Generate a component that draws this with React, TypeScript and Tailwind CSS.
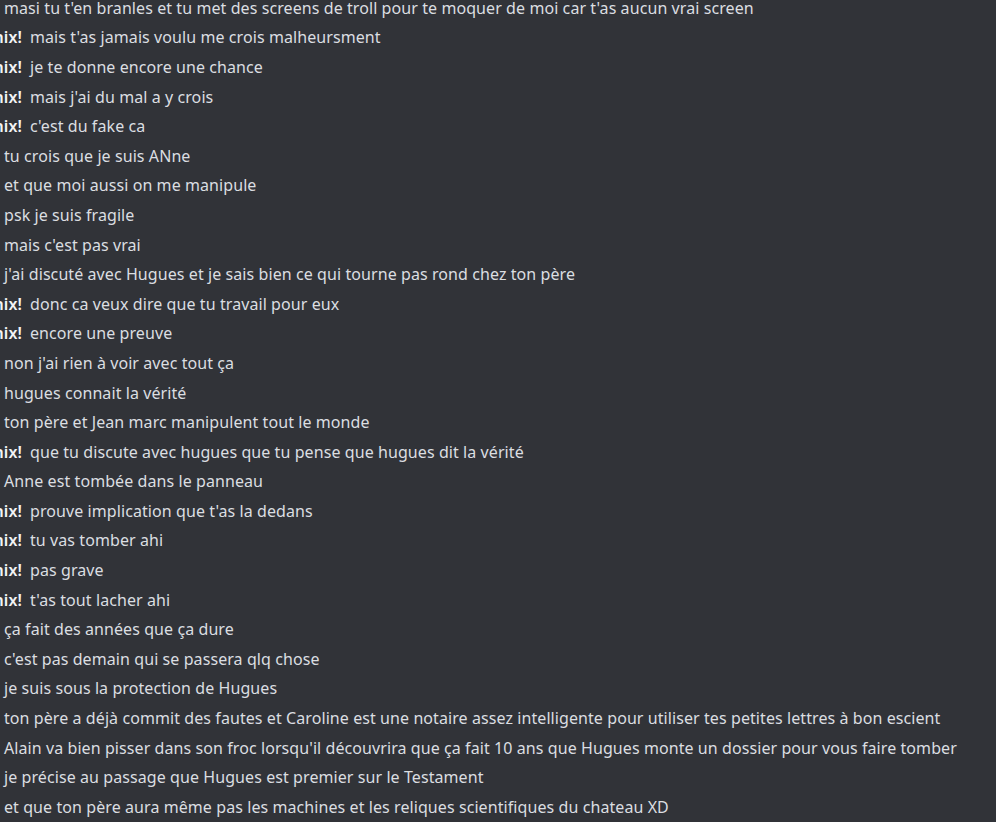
const NAME = 'Phénix!';

const messages: { nix?: boolean; text: string }[] = [
  { text: "masi tu t'en branles et tu met des screens de troll pour te moquer de moi car t'as aucun vrai screen" },
  { nix: true, text: "mais t'as jamais voulu me crois malheursment" },
  { nix: true, text: 'je te donne encore une chance' },
  { nix: true, text: "mais j'ai du mal a y crois" },
  { nix: true, text: "c'est du fake ca" },
  { text: 'tu crois que je suis ANne' },
  { text: 'et que moi aussi on me manipule' },
  { text: 'psk je suis fragile' },
  { text: "mais c'est pas vrai" },
  { text: "j'ai discuté avec Hugues et je sais bien ce qui tourne pas rond chez ton père" },
  { nix: true, text: 'donc ca veux dire que tu travail pour eux' },
  { nix: true, text: 'encore une preuve' },
  { text: "non j'ai rien à voir avec tout ça" },
  { text: 'hugues connait la vérité' },
  { text: 'ton père et Jean marc manipulent tout le monde' },
  { nix: true, text: 'que tu discute avec hugues que tu pense que hugues dit la vérité' },
  { text: 'Anne est tombée dans le panneau' },
  { nix: true, text: "prouve implication que t'as la dedans" },
  { nix: true, text: 'tu vas tomber ahi' },
  { nix: true, text: 'pas grave' },
  { nix: true, text: "t'as tout lacher ahi" },
  { text: 'ça fait des années que ça dure' },
  { text: "c'est pas demain qui se passera qlq chose" },
  { text: 'je suis sous la protection de Hugues' },
  { text: 'ton père a déjà commit des fautes et Caroline est une notaire assez intelligente pour utiliser tes petites lettres à bon escient' },
  { text: "Alain va bien pisser dans son froc lorsqu'il découvrira que ça fait 10 ans que Hugues monte un dossier pour vous faire tomber" },
  { text: 'je précise au passage que Hugues est premier sur le Testament' },
  { text: 'et que ton père aura même pas les machines et les reliques scientifiques du chateau XD' },
];

export default function App() {
  return (
    <div
      className="h-[822px] w-[996px] overflow-hidden bg-[#313338] text-[16px] tracking-[0.08px] text-[#dbdee1]"
      style={{ fontFamily: '"Noto Sans", sans-serif' }}
    >
      <div className="mt-[-7px] flex flex-col">
        {messages.map((m, i) => (
          <div key={i} className="flex h-[29.6px] items-center whitespace-nowrap">
            {m.nix ? (
              <>
                <div className="flex w-[22px] shrink-0 justify-end overflow-hidden">
                  <span className="shrink-0 font-semibold text-[#f2f3f5]">{NAME}</span>
                </div>
                <span className="ml-[8px]">{m.text}</span>
              </>
            ) : (
              <span className="ml-[4px]">{m.text}</span>
            )}
          </div>
        ))}
      </div>
    </div>
  );
}
